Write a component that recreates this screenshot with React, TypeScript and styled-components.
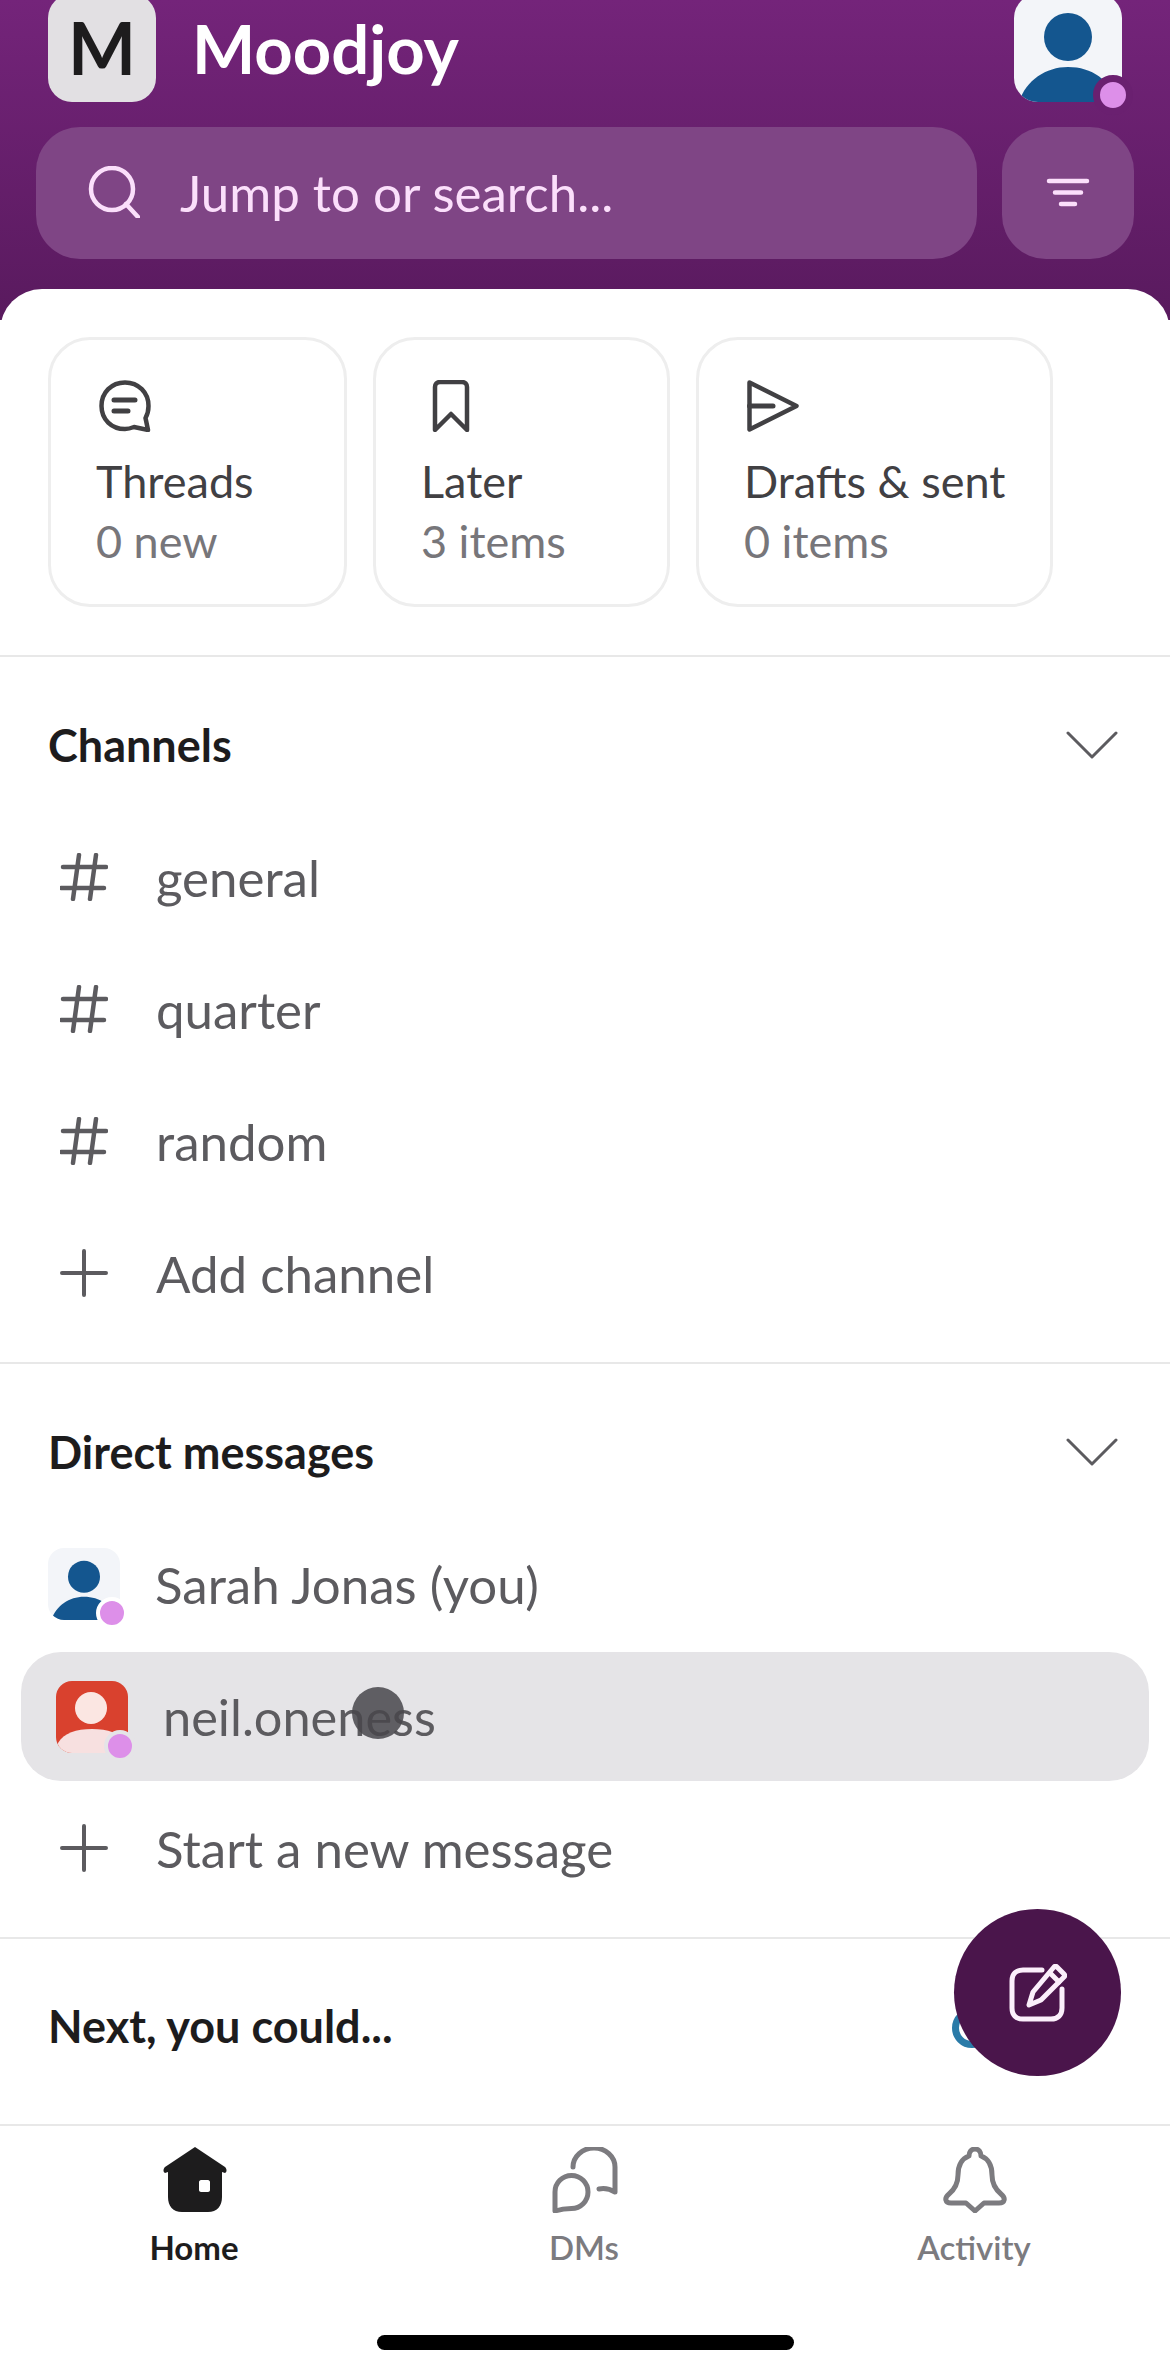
import React from 'react'
import styled, { createGlobalStyle } from 'styled-components'

const GlobalStyle = createGlobalStyle`
  html, body {
    margin: 0;
    padding: 0;
    background: #fff;
    font-family: Lato, "Open Sans", sans-serif;
  }
  * { box-sizing: border-box; }
`

const Page = styled.div`
  width: 1170px;
  height: 2374px;
  position: relative;
  overflow: hidden;
  display: flex;
  flex-direction: column;
  background: #fff;
`

const Header = styled.header`
  height: 320px;
  margin-bottom: -31px;
  padding: 0 36px;
  background: linear-gradient(180deg, #74247a 0%, #591a5e 100%);
  flex-shrink: 0;
`

const TopBar = styled.div`
  height: 102px;
  padding: 0 12px;
  display: flex;
  align-items: flex-end;
`

const WorkspaceTile = styled.div`
  width: 108px;
  height: 108px;
  flex-shrink: 0;
  padding-bottom: 2px;
  border-radius: 24px;
  background: #e2e0e3;
  color: #1d1c1d;
  font-size: 72px;
  font-weight: 700;
  display: flex;
  align-items: center;
  justify-content: center;
`

const WorkspaceName = styled.h1`
  margin: 0 0 16px 36px;
  flex: 1;
  color: #fff;
  font-size: 67px;
  line-height: 76px;
  font-weight: 700;
`

const ProfileWrap = styled.div`
  position: relative;
  width: 108px;
  height: 108px;
  flex-shrink: 0;
`

const ProfileImage = styled.div`
  width: 108px;
  height: 108px;
  border-radius: 24px;
  overflow: hidden;
  background: #f3f5f9;
`

const ProfileStatus = styled.span`
  position: absolute;
  right: -11px;
  bottom: -13px;
  width: 40px;
  height: 40px;
  border-radius: 50%;
  border: 7px solid #6a2070;
  background: #dd8fe9;
`

const SearchRow = styled.div`
  margin-top: 25px;
  display: flex;
  gap: 25px;
`

const SearchBox = styled.div`
  width: 941px;
  height: 132px;
  padding: 0 0 2px 52px;
  border-radius: 44px;
  background: #7f4585;
  display: flex;
  align-items: center;
  gap: 40px;
  color: #fbdffb;
  font-size: 51px;
`

const FilterButton = styled.div`
  width: 132px;
  height: 132px;
  border-radius: 44px;
  background: #7f4585;
  display: flex;
  align-items: center;
  justify-content: center;
`

const Sheet = styled.main`
  position: relative;
  flex: 1;
  min-height: 0;
  overflow: hidden;
  border-radius: 42px 42px 0 0;
  background: #fff;
`

const CardRow = styled.div`
  padding: 48px 48px 48px;
  display: flex;
  gap: 26px;
  border-bottom: 2px solid #e8e8e8;
`

const Card = styled.div<{ $width: number }>`
  width: ${props => props.$width}px;
  height: 270px;
  padding: 40px 0 0 45px;
  border: 3px solid #eeeeee;
  border-radius: 42px;
  display: flex;
  flex-direction: column;
`

const CardIcon = styled.div`
  height: 52px;
  margin: 0 0 19px 3px;
`

const CardTitle = styled.div`
  color: #414043;
  font-size: 45px;
  line-height: 60px;
`

const CardSub = styled.div`
  color: #77767a;
  font-size: 45px;
  line-height: 60px;
`

const Section = styled.section`
  padding: 33px 0 23px;
  border-bottom: 2px solid #e8e8e8;
`

const SectionHeader = styled.div`
  height: 121px;
  padding: 0 52px 11px 48px;
  display: flex;
  align-items: center;
  justify-content: space-between;
`

const SectionTitle = styled.h2`
  margin: 0;
  color: #1d1c1d;
  font-size: 45px;
  font-weight: 700;
`

const Row = styled.div<{ $active?: boolean }>`
  position: relative;
  height: ${props => (props.$active ? '129px' : '132px')};
  margin: ${props => (props.$active ? '2px 21px 1px' : '0 21px')};
  padding-left: ${props => (props.$active ? '35px' : '27px')};
  border-radius: 40px;
  background: ${props => (props.$active ? '#e5e4e7' : 'transparent')};
  display: flex;
  align-items: center;
  color: #5c5b5f;
  font-size: ${props => (props.$active ? '50.5px' : '51px')};
`

const RowIcon = styled.div`
  width: 72px;
  height: 72px;
  margin-right: 36px;
  flex-shrink: 0;
  display: flex;
  align-items: center;
  justify-content: center;
`

const AvatarWrap = styled.div`
  position: relative;
  width: 72px;
  height: 72px;
  margin-right: 35px;
  flex-shrink: 0;
`

const AvatarImage = styled.div<{ $bg: string }>`
  width: 72px;
  height: 72px;
  border-radius: 16px;
  overflow: hidden;
  background: ${props => props.$bg};
`

const AvatarStatus = styled.span<{ $ring: string }>`
  position: absolute;
  right: -8px;
  bottom: -9px;
  width: 32px;
  height: 32px;
  border-radius: 50%;
  border: 4px solid ${props => props.$ring};
  background: #dd8fe9;
`

const TouchDot = styled.span`
  position: absolute;
  left: 331px;
  top: 35px;
  width: 52px;
  height: 52px;
  border-radius: 50%;
  background: rgba(72, 71, 75, 0.85);
`

const NextRow = styled.div`
  padding: 60px 48px 0;
  display: flex;
  align-items: center;
  justify-content: space-between;
`

const NextSpinner = styled.span`
  width: 40px;
  height: 40px;
  margin: 4px 130px 0 0;
  border: 7px solid #2a7ba8;
  border-radius: 50%;
`

const Fab = styled.div`
  position: absolute;
  left: 954px;
  top: 1909px;
  width: 167px;
  height: 167px;
  border-radius: 50%;
  background: #4a154b;
  display: flex;
  align-items: center;
  justify-content: center;
`

const Nav = styled.nav`
  height: 250px;
  flex-shrink: 0;
  border-top: 2px solid #e8e8e8;
  background: #fff;
  display: flex;
  flex-direction: column;
`

const NavItems = styled.div`
  padding-top: 21px;
  display: grid;
  grid-template-columns: repeat(3, 1fr);
`

const NavItem = styled.div<{ $active?: boolean }>`
  display: flex;
  flex-direction: column;
  align-items: center;
  color: ${props => (props.$active ? '#1d1c1d' : '#7c7b7f')};
  font-size: 33px;
  line-height: 42px;
  font-weight: ${props => (props.$active ? 700 : 600)};
`

const NavIcon = styled.div`
  height: 66px;
  margin-bottom: 13px;
`

const NavLabel = styled.span`
  margin-right: 2px;
`

const HomeBar = styled.div`
  width: 417px;
  height: 15px;
  margin: auto auto 24px;
  border-radius: 8px;
  background: #000;
`

const PersonBlue = () => (
  <svg width="100%" height="100%" viewBox="0 0 108 108">
    <circle cx="54" cy="43" r="24" fill="#14568f" />
    <path d="M5 108 C12 86 32 73 54 73 C78 73 96 86 103 108 Z" fill="#14568f" />
  </svg>
)

const PersonRed = () => (
  <svg width="100%" height="100%" viewBox="0 0 72 72">
    <circle cx="35" cy="27" r="16" fill="#fbe6e2" />
    <path d="M2 62 C8 52 20 48 36 48 C52 48 64 52 70 62 C70 68 66 72 60 72 H12 C6 72 2 68 2 62 Z" fill="#f7e0e0" />
  </svg>
)

const SearchIcon = () => (
  <svg width="52" height="52" viewBox="0 0 52 52" fill="none" stroke="#fbdffb" strokeWidth="4.5" strokeLinecap="round">
    <circle cx="24" cy="23" r="21" />
    <path d="M38 38 L50 51" />
  </svg>
)

const FilterIcon = () => (
  <svg width="44" height="30" viewBox="0 0 44 30" fill="none" stroke="#fbdffb" strokeWidth="4.5" strokeLinecap="round">
    <path d="M3 3 H41 M9 14.5 H35 M15 26 H29" />
  </svg>
)

const ThreadsIcon = () => (
  <svg width="52" height="52" viewBox="0 0 52 52" fill="none" stroke="#414043" strokeWidth="4.5">
    <path d="M26 2.5 C12.5 2.5 2.5 12.5 2.5 26 C2.5 39.5 12.5 49 26 49 C29.5 49 32.5 48 35 47 L49 50 L46.5 38 C48.5 34.5 49.5 30.5 49.5 26 C49.5 12.5 39.5 2.5 26 2.5 Z" strokeLinejoin="round" />
    <path d="M15 20 H36 M15 31 H29" strokeWidth="5" strokeLinecap="round" />
  </svg>
)

const BookmarkIcon = () => (
  <svg width="52" height="52" viewBox="0 0 52 52" fill="none" stroke="#414043" strokeWidth="4.5" strokeLinejoin="round">
    <path d="M11 7 C11 4 13 2 16 2 H38 C41 2 43 4 43 7 V50 L27 34 L11 50 Z" />
  </svg>
)

const SendIcon = () => (
  <svg width="52" height="52" viewBox="0 0 52 52" fill="none" stroke="#414043" strokeWidth="4.5" strokeLinejoin="round">
    <path d="M2.5 2.5 L49.5 26 L2.5 49.5 Z" />
    <path d="M2.5 26 H26" strokeWidth="5" strokeLinecap="round" />
  </svg>
)

const Chevron = () => (
  <svg width="52" height="28" viewBox="0 0 52 28" fill="none" stroke="#5c5b5f" strokeWidth="3" strokeLinecap="round" strokeLinejoin="round">
    <path d="M2 2 L26 26 L50 2" />
  </svg>
)

const HashIcon = () => (
  <svg width="48" height="48" viewBox="0 0 48 48" fill="none" stroke="#5c5b5f" strokeWidth="4.5" strokeLinecap="round">
    <path d="M3 14 H46 M1 35 H44 M19 2 L13 46 M36 2 L30 46" />
  </svg>
)

const PlusIcon = () => (
  <svg width="48" height="48" viewBox="0 0 48 48" fill="none" stroke="#5c5b5f" strokeWidth="4" strokeLinecap="round">
    <path d="M2 24 H46 M24 2 V46" />
  </svg>
)

const ComposeIcon = () => (
  <svg width="58" height="58" viewBox="0 0 58 58" fill="none" stroke="#fbeffb" strokeWidth="5" strokeLinecap="round" strokeLinejoin="round">
    <path d="M33 6 H14 C7 6 3 10 3 17 V44 C3 51 7 55 14 55 H42 C49 55 53 51 53 44 V25" />
    <path d="M48 3 L55 10 C56 11 56 12 55 13 L32 36 L20 41 L24 28 L45 3 C46 2 47 2 48 3 Z" />
    <path d="M41 9 L50 18" />
  </svg>
)

const HomeIcon = () => (
  <svg width="64" height="66" viewBox="0 0 64 66" fill="#1d1c1d">
    <path fillRule="evenodd" d="M32 0 L62 20 C64 22 64 25 62 26 L59 25 V50 C59 59 54 65 45 65 H19 C10 65 5 59 5 50 V25 L2 26 C0 25 0 22 2 20 Z M36 35 C36 34 37 33 38 33 H45 C46 33 47 34 47 35 V43 C47 44 46 45 45 45 H38 C37 45 36 44 36 43 Z" />
  </svg>
)

const DmsIcon = () => (
  <svg width="66" height="66" viewBox="0 0 66 66" fill="none" stroke="#7c7b7f" strokeWidth="5" strokeLinecap="round" strokeLinejoin="round">
    <path d="M3 64 V45 A16.5 16.5 0 1 1 19.5 61.5 C14 61.5 9 62 3 64 Z" />
    <path d="M21 20 A21 19 0 0 1 63 20 V45 C58 42 52 41 47 42" />
  </svg>
)

const BellIcon = () => (
  <svg width="66" height="66" viewBox="0 0 66 66" fill="none" stroke="#7c7b7f" strokeWidth="5" strokeLinejoin="round">
    <path d="M33 2 C37 2 39 5 39 9 C47 12 50 20 50 28 C50 36 53 42 59 47 C64 51 63 56 57 56 H42 L33 64 L24 56 H9 C3 56 2 51 7 47 C13 42 16 36 16 28 C16 20 19 12 27 9 C27 5 29 2 33 2 Z" />
  </svg>
)

const cards = [
  { id: 1, width: 299, icon: <ThreadsIcon />, title: 'Threads', sub: '0 new' },
  { id: 2, width: 297, icon: <BookmarkIcon />, title: 'Later', sub: '3 items' },
  { id: 3, width: 357, icon: <SendIcon />, title: 'Drafts & sent', sub: '0 items' },
]

const channels = ['general', 'quarter', 'random']

const App = () => {
  return (
    <Page>
      <GlobalStyle />
      <Header>
        <TopBar>
          <WorkspaceTile>M</WorkspaceTile>
          <WorkspaceName>Moodjoy</WorkspaceName>
          <ProfileWrap>
            <ProfileImage>
              <PersonBlue />
            </ProfileImage>
            <ProfileStatus />
          </ProfileWrap>
        </TopBar>
        <SearchRow>
          <SearchBox>
            <SearchIcon />
            Jump to or search...
          </SearchBox>
          <FilterButton>
            <FilterIcon />
          </FilterButton>
        </SearchRow>
      </Header>

      <Sheet>
        <CardRow>
          {cards.map(card => (
            <Card key={card.id} $width={card.width}>
              <CardIcon>{card.icon}</CardIcon>
              <CardTitle>{card.title}</CardTitle>
              <CardSub>{card.sub}</CardSub>
            </Card>
          ))}
        </CardRow>

        <Section>
          <SectionHeader>
            <SectionTitle>Channels</SectionTitle>
            <Chevron />
          </SectionHeader>
          {channels.map(name => (
            <Row key={name}>
              <RowIcon><HashIcon /></RowIcon>
              {name}
            </Row>
          ))}
          <Row>
            <RowIcon><PlusIcon /></RowIcon>
            Add channel
          </Row>
        </Section>

        <Section>
          <SectionHeader>
            <SectionTitle>Direct messages</SectionTitle>
            <Chevron />
          </SectionHeader>
          <Row>
            <AvatarWrap>
              <AvatarImage $bg="#f3f5f9"><PersonBlue /></AvatarImage>
              <AvatarStatus $ring="#ffffff" />
            </AvatarWrap>
            Sarah Jonas (you)
          </Row>
          <Row $active>
            <AvatarWrap>
              <AvatarImage $bg="#d9412e"><PersonRed /></AvatarImage>
              <AvatarStatus $ring="#e5e4e7" />
            </AvatarWrap>
            neil.oneness
            <TouchDot />
          </Row>
          <Row>
            <RowIcon><PlusIcon /></RowIcon>
            Start a new message
          </Row>
        </Section>

        <NextRow>
          <SectionTitle>Next, you could...</SectionTitle>
          <NextSpinner />
        </NextRow>
      </Sheet>

      <Nav>
        <NavItems>
          <NavItem $active>
            <NavIcon><HomeIcon /></NavIcon>
            <NavLabel>Home</NavLabel>
          </NavItem>
          <NavItem>
            <NavIcon><DmsIcon /></NavIcon>
            <NavLabel>DMs</NavLabel>
          </NavItem>
          <NavItem>
            <NavIcon><BellIcon /></NavIcon>
            <NavLabel>Activity</NavLabel>
          </NavItem>
        </NavItems>
        <HomeBar />
      </Nav>

      <Fab><ComposeIcon /></Fab>
    </Page>
  )
}

export default App
